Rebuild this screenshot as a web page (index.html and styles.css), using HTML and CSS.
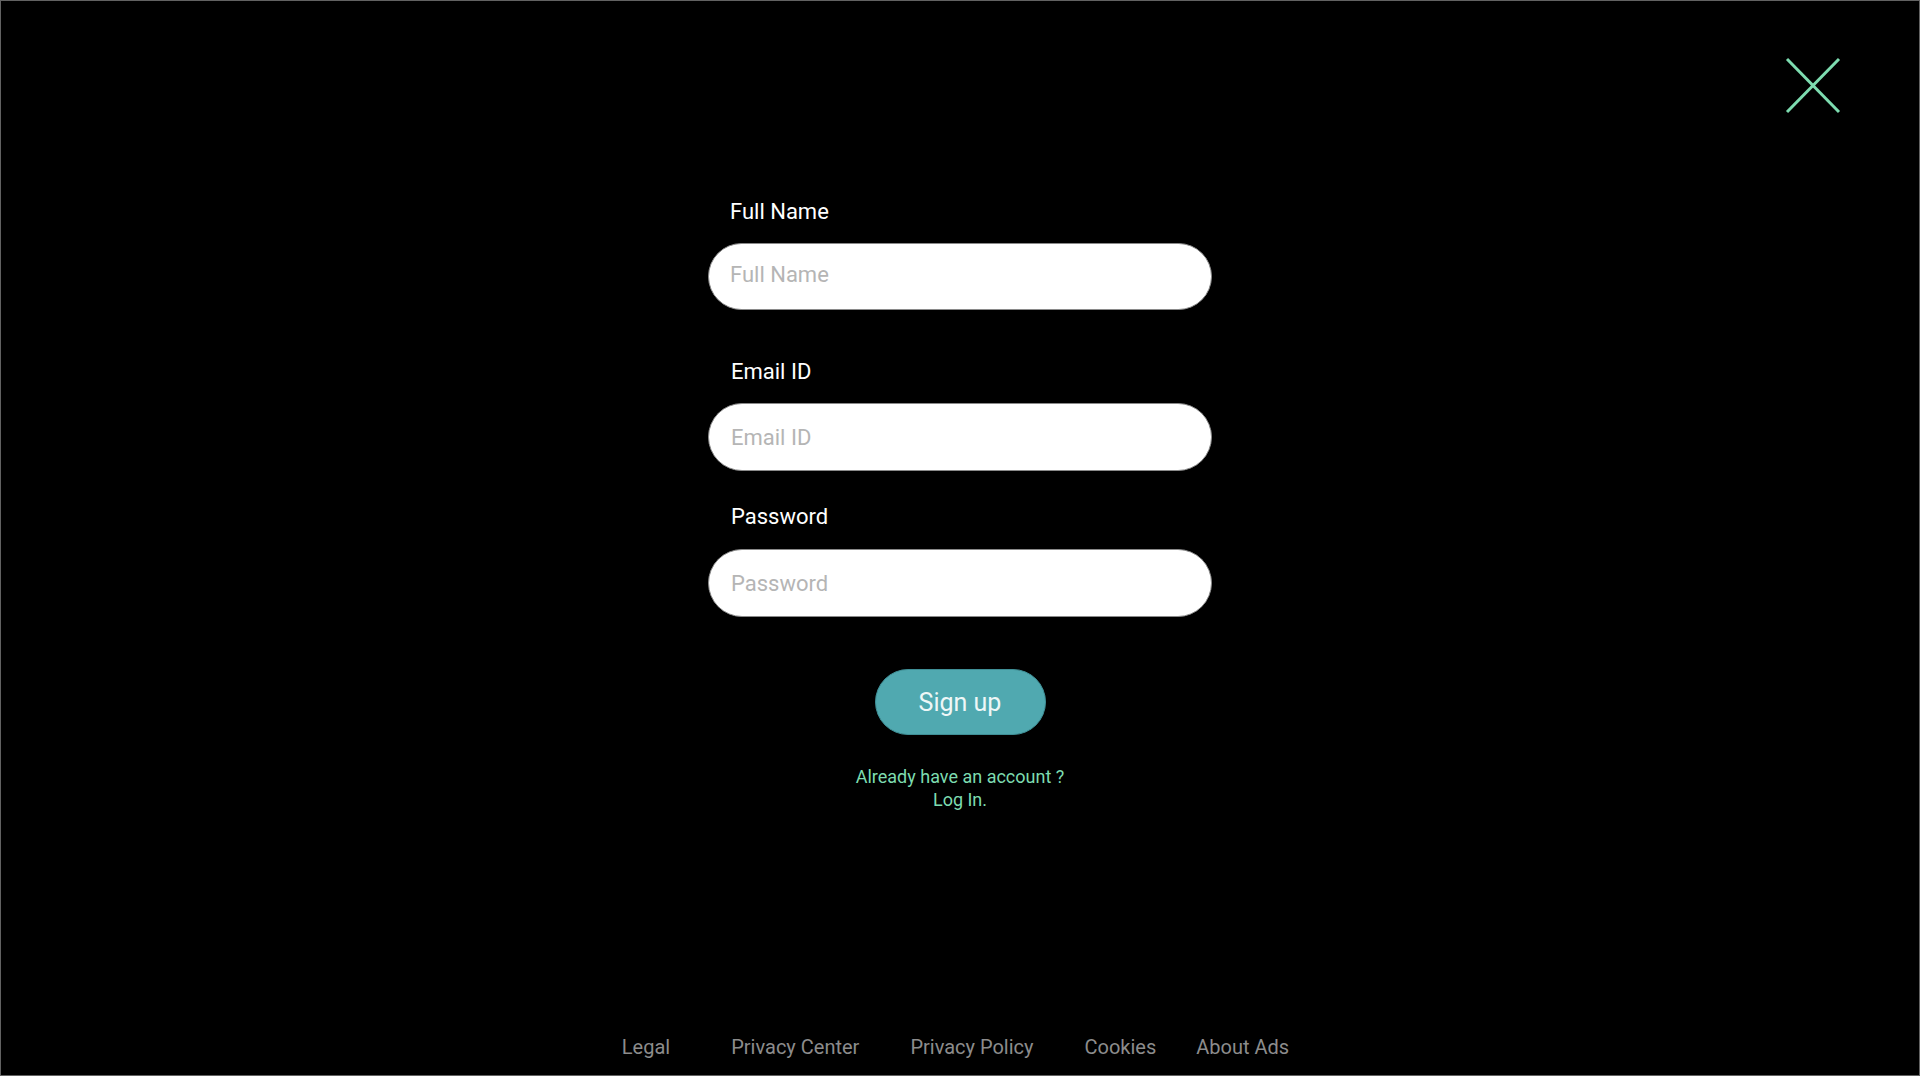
FILE: index.html
```html
<!DOCTYPE html>
<html lang="en">
<head>
<meta charset="utf-8">
<title>Sign up</title>
<link rel="stylesheet" href="styles.css">
</head>
<body>
<div class="page">
  <button class="close" aria-label="Close">
    <svg width="56" height="57" viewBox="0 0 56 57">
      <line x1="2" y1="2" x2="54" y2="55" />
      <line x1="54" y1="2" x2="2" y2="55" />
    </svg>
  </button>
  <form class="form">
    <label class="label label-name" for="fn">Full Name</label>
    <input class="field field-name" id="fn" type="text" placeholder="Full Name">
    <label class="label label-email" for="em">Email ID</label>
    <input class="field field-email" id="em" type="email" placeholder="Email ID">
    <label class="label label-pass" for="pw">Password</label>
    <input class="field field-pass" id="pw" type="password" placeholder="Password">
    <button class="signup" type="button">Sign up</button>
    <p class="login">Already have an account ?<br>Log In.</p>
  </form>
  <footer class="footer">
    <a class="flink f-legal">Legal</a>
    <a class="flink">Privacy Center</a>
    <a class="flink">Privacy Policy</a>
    <a class="flink f-cookies">Cookies</a>
    <a class="flink">About Ads</a>
  </footer>
</div>
</body>
</html>
```

FILE: styles.css
```css
* { box-sizing: border-box; }
html, body { margin: 0; padding: 0; background: #000; }
body { font-family: Roboto, "Noto Sans", sans-serif; }

.page {
  position: relative;
  width: 1920px;
  height: 1076px;
  border: 1px solid #626262;
  background: #000;
  display: flex;
  flex-direction: column;
  align-items: center;
}

.close {
  position: absolute;
  top: 56px;
  left: 1784px;
  width: 56px;
  height: 57px;
  padding: 0;
  border: 0;
  background: transparent;
}
.close svg { display: block; }
.close line { stroke: #7ddcb0; stroke-width: 3; }

.form {
  margin-top: 197px;
  width: 504px;
  display: flex;
  flex-direction: column;
  align-items: stretch;
}

.label {
  color: #fff;
  font-size: 22px;
  line-height: 26px;
  padding-top: 1px;
  padding-left: 22px;
}
.label-email { margin-top: 48px; padding-left: 23px; }
.label-pass { margin-top: 32px; padding-left: 23px; }

.field {
  margin-top: 18px;
  height: 68px;
  border: 1px solid #8a8a8a;
  border-radius: 34px;
  background: #fff;
  padding: 0 22px;
  font-family: Roboto, "Noto Sans", sans-serif;
  font-size: 22px;
  color: #333;
  outline: none;
}
.field-name { height: 67px; padding-left: 21px; padding-bottom: 4px; }
.field-pass { margin-top: 19px; }
.field-email, .field-pass { padding-left: 22px; }
.field::placeholder { color: #b5b5b5; }

.signup {
  align-self: center;
  margin-top: 52px;
  width: 171px;
  height: 66px;
  border: 1px solid #3f8f96;
  border-radius: 33px;
  background: #50a9b0;
  color: #eef7f7;
  font-family: Roboto, "Noto Sans", sans-serif;
  font-size: 25px;
  padding: 0;
}

.login {
  margin: 30px 0 0;
  text-align: center;
  color: #7ddcb0;
  font-size: 18px;
  line-height: 23px;
}

.footer {
  margin-top: auto;
  padding: 0 9px 16px 0;
  display: flex;
  gap: 51px;
  font-size: 20px;
  line-height: 24px;
}
.flink { color: #8c8c8c; }
.f-legal { margin-right: 10px; }
.f-cookies { margin-right: -11px; }
```
